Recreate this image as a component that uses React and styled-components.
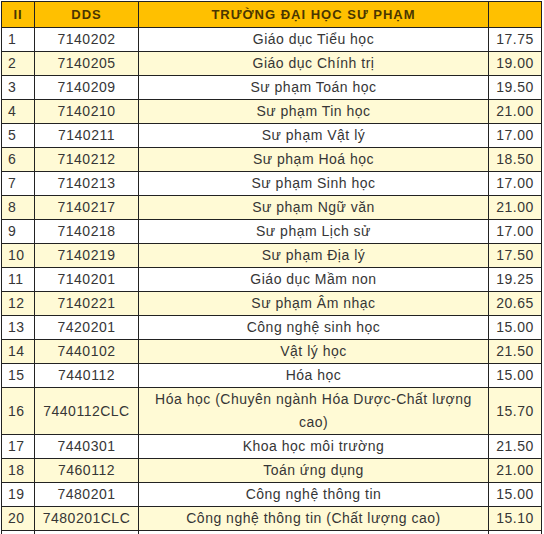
import React from 'react'
import styled, { createGlobalStyle } from 'styled-components'

const GlobalStyle = createGlobalStyle`
  html, body {
    margin: 0;
    padding: 0;
    background: #fff;
  }
  body {
    font-family: "Liberation Sans", Arial, sans-serif;
  }
`

const Wrapper = styled.div`
  padding: 1px 3px 0 1px;
  height: 533px;
  overflow: hidden;
`

const Table = styled.table`
  width: 540px;
  border-collapse: collapse;
  table-layout: fixed;
  font-size: 14px;
  letter-spacing: 0.5px;
  color: #363636;
`

const HeadCell = styled.th`
  background: #ffc000;
  color: #4a3600;
  font-weight: bold;
  font-size: 13px;
  letter-spacing: 1px;
  text-align: center;
  height: 25px;
  padding: 0;
  border: 1px solid #222;
`

const Row = styled.tr`
  background: ${props => props.$alt ? '#fffad5' : '#fff'};
`

const Cell = styled.td`
  border: 1px solid #222;
  padding: 0 ${props => props.$wide ? '10px' : '6px'};
  line-height: 23px;
  text-align: ${props => props.$align || 'center'};
  vertical-align: middle;
  white-space: ${props => props.$wide ? 'normal' : 'nowrap'};
  overflow: hidden;
`

const rows = [
  ['7140202', 'Giáo dục Tiểu học', '17.75'],
  ['7140205', 'Giáo dục Chính trị', '19.00'],
  ['7140209', 'Sư phạm Toán học', '19.50'],
  ['7140210', 'Sư phạm Tin học', '21.00'],
  ['7140211', 'Sư phạm Vật lý', '17.00'],
  ['7140212', 'Sư phạm Hoá học', '18.50'],
  ['7140213', 'Sư phạm Sinh học', '17.00'],
  ['7140217', 'Sư phạm Ngữ văn', '21.00'],
  ['7140218', 'Sư phạm Lịch sử', '17.00'],
  ['7140219', 'Sư phạm Địa lý', '17.50'],
  ['7140201', 'Giáo dục Mầm non', '19.25'],
  ['7140221', 'Sư phạm Âm nhạc', '20.65'],
  ['7420201', 'Công nghệ sinh học', '15.00'],
  ['7440102', 'Vật lý học', '21.50'],
  ['7440112', 'Hóa học', '15.00'],
  ['7440112CLC', 'Hóa học (Chuyên ngành Hóa Dược-Chất lượng cao)', '15.70'],
  ['7440301', 'Khoa học môi trường', '21.50'],
  ['7460112', 'Toán ứng dụng', '21.00'],
  ['7480201', 'Công nghệ thông tin', '15.00'],
  ['7480201CLC', 'Công nghệ thông tin (Chất lượng cao)', '15.10'],
  ['', '', ''],
]

const App = () => {
  return (
    <Wrapper>
      <GlobalStyle />
      <Table>
        <colgroup>
          <col style={{ width: '33px' }} />
          <col style={{ width: '104px' }} />
          <col style={{ width: '350px' }} />
          <col style={{ width: '53px' }} />
        </colgroup>
        <thead>
          <tr>
            <HeadCell>II</HeadCell>
            <HeadCell>DDS</HeadCell>
            <HeadCell>TRƯỜNG ĐẠI HỌC SƯ PHẠM</HeadCell>
            <HeadCell></HeadCell>
          </tr>
        </thead>
        <tbody>
          {rows.map((item, i) => (
            <Row key={i} $alt={i % 2 === 1}>
              <Cell $align='left'>{item[0] ? i + 1 : '\u00a0'}</Cell>
              <Cell>{item[0] || '\u00a0'}</Cell>
              <Cell $wide>{item[1] || '\u00a0'}</Cell>
              <Cell>{item[2] || '\u00a0'}</Cell>
            </Row>
          ))}
        </tbody>
      </Table>
    </Wrapper>
  )
}

export default App
